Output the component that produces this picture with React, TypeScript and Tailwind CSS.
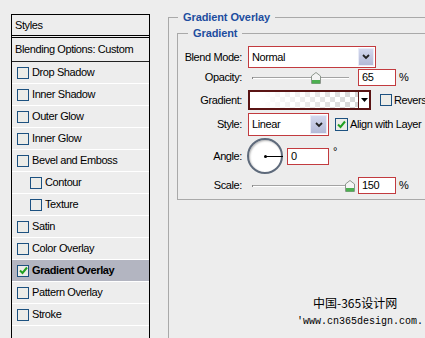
import React from 'react';
import clsx from 'clsx';

const Check = ({ checked, big }: { checked?: boolean; big?: boolean }) => (
  <span
    className={clsx(
      'shrink-0 inline-flex items-center justify-center border border-[#1c5180] bg-[#ecece8]',
      big ? 'w-[13px] h-[13px]' : 'w-[12px] h-[12px]'
    )}
  >
    {checked && (
      <svg width="9" height="9" viewBox="0 0 9 9">
        <path d="M1 4.5 L3.5 7 L8 1.5" stroke="#21a121" strokeWidth="2" fill="none" />
      </svg>
    )}
  </span>
);

const DropBtn = ({ w = 'w-[16px]' }: { w?: string }) => (
  <span className={clsx('h-full flex items-center justify-center bg-linear-to-b from-[#d3d8ee] to-[#b3b9d6] border border-[#e8ebf7]', w)}>
    <svg width="8" height="6" viewBox="0 0 8 6">
      <path d="M1 1 L4 4 L7 1" stroke="#222" strokeWidth="1.8" fill="none" />
    </svg>
  </span>
);

const Slider = ({ pos }: { pos: number }) => (
  <div className="relative w-[110px] h-[17px] flex items-center">
    <div className="ml-[4px] w-[97px] h-[2px] border-t border-[#a3a3a3] border-b border-b-white" />
    <div className="absolute left-[4px] top-[8px] w-[1px] h-[2px] bg-[#888]" />
    <svg className="absolute top-[3px]" style={{ left: pos - 5 }} width="10" height="12" viewBox="0 0 10 12">
      <path d="M0.5 4 L5 0.5 L9.5 4 V11.5 H0.5 Z" fill="#f4f4f4" stroke="#8d978d" />
      <rect x="1" y="8" width="8" height="3.5" fill="#4caf50" />
    </svg>
  </div>
);

const Field = ({ value, w }: { value: string; w: string }) => (
  <div className={clsx('h-[17px] border border-[#c23b3f] bg-white pl-[3px] flex items-center leading-none', w)}>
    {value}
  </div>
);

const styles: { label: string; indent?: boolean; active?: boolean }[] = [
  { label: 'Drop Shadow' },
  { label: 'Inner Shadow' },
  { label: 'Outer Glow' },
  { label: 'Inner Glow' },
  { label: 'Bevel and Emboss' },
  { label: 'Contour', indent: true },
  { label: 'Texture', indent: true },
  { label: 'Satin' },
  { label: 'Color Overlay' },
  { label: 'Gradient Overlay', active: true },
  { label: 'Pattern Overlay' },
  { label: 'Stroke' },
];

const Label = ({ children }: { children: React.ReactNode }) => (
  <div className="w-[65px] shrink-0 text-right pr-[1px]">{children}</div>
);

export default function App() {
  return (
    <div className="w-[425px] h-[338px] bg-[#ededed] flex overflow-hidden font-['Liberation_Sans',Arial,sans-serif] text-[11px] tracking-[-0.4px] text-black">
      {/* styles list */}
      <div className="ml-[11px] mt-[14px] w-[139px] h-[330px] shrink-0 border border-b-0 border-black flex flex-col">
        <div className="h-[20px] pl-[3px] flex items-center">Styles</div>
        <div className="h-[3px] border-y border-black" />
        <div className="h-[24px] pl-[3px] flex items-center border-b border-[#222]">Blending Options: Custom</div>
        {styles.map((s) => (
          <div
            key={s.label}
            className={clsx(
              'h-[22px] flex items-center gap-[3px] border-b border-white',
              s.indent ? 'pl-[18px]' : 'pl-[5px]',
              s.active && 'bg-[#b3b5c1] font-bold'
            )}
          >
            <Check checked={s.active} />
            <span>{s.label}</span>
          </div>
        ))}
      </div>

      {/* settings */}
      <fieldset className="ml-[18px] mt-[11px] w-[290px] h-[340px] shrink-0 border border-[#a9a9a9]">
        <legend className="ml-[9px] px-[5px] leading-[13px] font-bold tracking-[-0.1px] text-[#1d4d9f]">Gradient Overlay</legend>
        <fieldset className="ml-[8px] mt-[3px] w-[270px] border border-[#a9a9a9] pb-[5px]">
          <legend className="ml-[10px] px-[5px] leading-[13px] font-bold tracking-[-0.1px] text-[#1d4d9f]">Gradient</legend>

          <div className="mt-[6px] h-[22px] flex items-center">
            <Label>Blend Mode:</Label>
            <div className="ml-[5px] w-[128px] h-[22px] border border-[#c23b3f] bg-white flex items-center p-[1px]">
              <span className="flex-1 pl-[2px]">Normal</span>
              <DropBtn />
            </div>
          </div>

          <div className="mt-[1px] h-[17px] flex items-center">
            <Label>Opacity:</Label>
            <div className="ml-[5px]">
              <Slider pos={68} />
            </div>
            <Field value="65" w="w-[38px]" />
            <span className="ml-[3px]">%</span>
          </div>

          <div className="mt-[4px] h-[20px] flex items-center">
            <Label>Gradient:</Label>
            <div className="ml-[5px] w-[123px] h-[20px] border-2 border-[#5a1414] flex">
              <div className="flex-1 bg-[repeating-conic-gradient(#d6d6d6_0_25%,#ffffff_0_50%)] bg-size-[10px_10px]">
                <div className="w-full h-full bg-linear-to-r from-white from-10% to-transparent" />
              </div>
              <div className="w-[11px] border-l border-[#5a1414] bg-white flex items-center justify-center">
                <svg width="7" height="4" viewBox="0 0 7 4">
                  <path d="M0 0 H7 L3.5 4 Z" fill="#000" />
                </svg>
              </div>
            </div>
            <div className="ml-[9px] flex items-center gap-[2px]">
              <Check />
              <span>Reverse</span>
            </div>
          </div>

          <div className="mt-[3px] h-[23px] flex items-center">
            <Label>Style:</Label>
            <div className="ml-[5px] w-[81px] h-[23px] border border-[#c23b3f] bg-white flex items-center p-[1px]">
              <span className="flex-1 pl-[2px]">Linear</span>
              <DropBtn w="w-[17px]" />
            </div>
            <div className="ml-[6px] flex items-center gap-[2px]">
              <Check checked big />
              <span>Align with Layer</span>
            </div>
          </div>

          <div className="mt-[2px] h-[36px] flex items-center">
            <Label>Angle:</Label>
            <div className="ml-[4px] relative w-[36px] h-[36px] rounded-full border-2 border-[#5e6a7b] bg-white shadow-[inset_1px_1px_2px_#b8b8b8]">
              <div className="absolute left-[15px] top-[15px] w-[3px] h-[3px] rounded-full bg-black" />
              <div className="absolute left-[16px] top-[16px] w-[18px] h-[1px] bg-black" />
            </div>
            <div className="ml-[4px]">
              <Field value="0" w="w-[42px]" />
            </div>
            <span className="ml-[4px] self-start mt-[8px] leading-none">°</span>
          </div>

          <div className="mt-[3px] h-[17px] flex items-center">
            <Label>Scale:</Label>
            <div className="ml-[5px]">
              <Slider pos={102} />
            </div>
            <Field value="150" w="w-[38px]" />
            <span className="ml-[3px]">%</span>
          </div>
        </fieldset>

        <div className="mt-[96px] flex flex-col leading-[14px] tracking-normal">
          <span className="pl-[144px] text-[12px] font-['Noto_Sans_CJK_SC',sans-serif]">中国-365设计网</span>
          <span className="pl-[128px] mt-[5px] text-[10px] font-['Liberation_Mono',monospace]">'www.cn365design.com.</span>
        </div>
      </fieldset>
    </div>
  );
}
